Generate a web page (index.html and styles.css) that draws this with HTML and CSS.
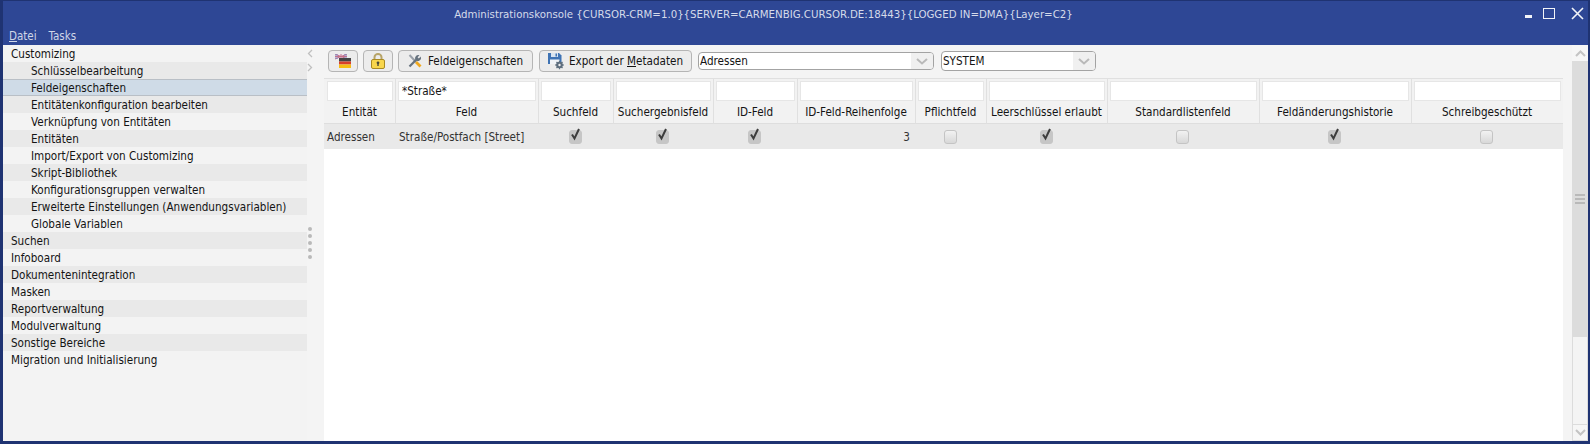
FILE: index.html
```html
<!DOCTYPE html>
<html lang="de">
<head>
<meta charset="utf-8">
<title>Administrationskonsole</title>
<link rel="stylesheet" href="styles.css">
</head>
<body>
<div class="window">
  <header class="chrome">
    <div class="titlebar">
      <div class="title">Administrationskonsole {CURSOR-CRM=1.0}{SERVER=CARMENBIG.CURSOR.DE:18443}{LOGGED IN=DMA}{Layer=C2}</div>
      <div class="winbtns">
        <span class="wb-min"></span>
        <span class="wb-max"></span>
        <svg class="wb-close" width="13" height="13" viewBox="0 0 13 13"><path d="M1 1l11 11M12 1L1 12" stroke="#f2f4f8" stroke-width="1.6" fill="none"/></svg>
      </div>
    </div>
    <nav class="menubar"><span><u>D</u>atei</span><span>Tasks</span></nav>
  </header>
  <div class="body">
    <aside class="sidebar">
      <div class="item odd">Customizing</div>
      <div class="item sub even">Schlüsselbearbeitung</div>
      <div class="item sub selected">Feldeigenschaften</div>
      <div class="item sub even">Entitätenkonfiguration bearbeiten</div>
      <div class="item sub odd">Verknüpfung von Entitäten</div>
      <div class="item sub even">Entitäten</div>
      <div class="item sub odd">Import/Export von Customizing</div>
      <div class="item sub even">Skript-Bibliothek</div>
      <div class="item sub odd">Konfigurationsgruppen verwalten</div>
      <div class="item sub even">Erweiterte Einstellungen (Anwendungsvariablen)</div>
      <div class="item sub odd">Globale Variablen</div>
      <div class="item even">Suchen</div>
      <div class="item odd">Infoboard</div>
      <div class="item even">Dokumentenintegration</div>
      <div class="item odd">Masken</div>
      <div class="item even">Reportverwaltung</div>
      <div class="item odd">Modulverwaltung</div>
      <div class="item even">Sonstige Bereiche</div>
      <div class="item odd">Migration und Initialisierung</div>
    </aside>
    <div class="splitter">
      <div class="arrows">
        <svg width="6" height="9" viewBox="0 0 6 9"><path d="M5 1L1.500 4.500 5 8" stroke="#c0c0c0" stroke-width="1.300" fill="none"/></svg>
        <svg width="6" height="9" viewBox="0 0 6 9"><path d="M1 1l3.500 3.500L1 8" stroke="#c0c0c0" stroke-width="1.300" fill="none"/></svg>
      </div>
      <div class="grip"><i></i><i></i><i></i><i></i><i></i></div>
    </div>
    <main class="main">
      <div class="toolbar">
        <button class="btn icon-btn">
          <svg width="16" height="14" viewBox="0 0 16 14">
            <rect x="0" y="0" width="12" height="5" fill="#eee9f0"/>
            <path d="M0 0l12 5M12 0L0 5M6 0v5M0 2.500h12" stroke="#c4708a" stroke-width="1" fill="none"/>
            <path d="M0 1h3M9 4h3M9 1h3M0 4h3" stroke="#7a80bc" stroke-width="1"/>
            <rect x="4" y="4" width="12" height="3.500" fill="#454545"/>
            <rect x="4" y="7.500" width="12" height="3" fill="#d8402a"/>
            <rect x="4" y="10.500" width="12" height="3.500" fill="#f6bd12"/>
          </svg>
        </button>
        <button class="btn icon-btn">
          <svg width="14" height="16" viewBox="0 0 14 16">
            <path d="M3.500 7V4.200a3.500 3.200 0 0 1 7 0V7" fill="none" stroke="#b7a468" stroke-width="2"/>
            <rect x="0.500" y="6.500" width="13" height="9" rx="1.500" fill="#f8d64c" stroke="#a98a22"/>
            <circle cx="7" cy="9.800" r="1.400" fill="#4a4a3a"/>
            <rect x="6.300" y="9.800" width="1.400" height="3.200" fill="#4a4a3a"/>
          </svg>
        </button>
        <button class="btn text-btn feld">
          <svg width="14" height="14" viewBox="0 0 14 14">
            <path d="M1.500 1l6.500 7" stroke="#9aa0a8" stroke-width="2" fill="none"/>
            <path d="M8 8l4.500 4.500" stroke="#f0a81e" stroke-width="2.800" fill="none"/>
            <path d="M1.500 12.500L8.200 5.800" stroke="#66727e" stroke-width="2.200" fill="none"/>
            <path d="M7.500 6a3.300 3.300 0 0 1 4-4.800L9.600 3.300l1.200 1.200 2-2A3.300 3.300 0 0 1 8 6.500z" fill="#66727e"/>
          </svg>
          <span>Feldeigenschaften</span>
        </button>
        <button class="btn text-btn export">
          <svg width="16" height="17" viewBox="0 0 16 17">
            <path d="M0 0h11l2.500 2.500V11H0z" fill="#3f73b4"/>
            <rect x="3" y="0" width="7" height="4" fill="#d9e4f0"/>
            <rect x="7.500" y="0.500" width="1.500" height="3" fill="#3f73b4"/>
            <rect x="2" y="6.500" width="9.500" height="4.500" fill="#f0f3f7"/>
            <circle cx="11.500" cy="12" r="3.300" fill="#5e6e7e"/>
            <path d="M11.500 7.800v8.400M7.300 12h8.400M8.500 9l6 6M14.500 9l-6 6" stroke="#5e6e7e" stroke-width="1.300"/>
            <circle cx="11.500" cy="12" r="1.200" fill="#f0f0f0"/>
          </svg>
          <span>Export der <u>M</u>etadaten</span>
        </button>
        <div class="combo combo-a"><span>Adressen</span><b><svg width="12" height="7" viewBox="0 0 12 7"><path d="M1 1l5 4.500L11 1" stroke="#b9b9b9" stroke-width="2" fill="none"/></svg></b></div>
        <div class="combo combo-b"><span>SYSTEM</span><b><svg width="12" height="7" viewBox="0 0 12 7"><path d="M1 1l5 4.500L11 1" stroke="#b9b9b9" stroke-width="2" fill="none"/></svg></b></div>
      </div>
      <div class="table">
        <div class="head first"><input class="filter"><div class="label">Entität</div></div>
        <div class="head"><input class="filter" value="*Straße*"><div class="label">Feld</div></div>
        <div class="head"><input class="filter"><div class="label">Suchfeld</div></div>
        <div class="head"><input class="filter"><div class="label">Suchergebnisfeld</div></div>
        <div class="head"><input class="filter"><div class="label">ID-Feld</div></div>
        <div class="head"><input class="filter"><div class="label">ID-Feld-Reihenfolge</div></div>
        <div class="head"><input class="filter"><div class="label">Pflichtfeld</div></div>
        <div class="head"><input class="filter"><div class="label">Leerschlüssel erlaubt</div></div>
        <div class="head"><input class="filter"><div class="label">Standardlistenfeld</div></div>
        <div class="head"><input class="filter"><div class="label">Feldänderungshistorie</div></div>
        <div class="head last"><input class="filter"><div class="label">Schreibgeschützt</div></div>

        <div class="cell">Adressen</div>
        <div class="cell">Straße/Postfach [Street]</div>
        <div class="cell center"><span class="check on"><svg width="11" height="13" viewBox="0 0 11 13"><path d="M2 6.500l2.500 4L9 1" stroke="#3c3c3c" stroke-width="2" fill="none"/></svg></span></div>
        <div class="cell center"><span class="check on"><svg width="11" height="13" viewBox="0 0 11 13"><path d="M2 6.500l2.500 4L9 1" stroke="#3c3c3c" stroke-width="2" fill="none"/></svg></span></div>
        <div class="cell center"><span class="check on"><svg width="11" height="13" viewBox="0 0 11 13"><path d="M2 6.500l2.500 4L9 1" stroke="#3c3c3c" stroke-width="2" fill="none"/></svg></span></div>
        <div class="cell right">3</div>
        <div class="cell center"><span class="check"></span></div>
        <div class="cell center"><span class="check on"><svg width="11" height="13" viewBox="0 0 11 13"><path d="M2 6.500l2.500 4L9 1" stroke="#3c3c3c" stroke-width="2" fill="none"/></svg></span></div>
        <div class="cell center"><span class="check"></span></div>
        <div class="cell center"><span class="check on"><svg width="11" height="13" viewBox="0 0 11 13"><path d="M2 6.500l2.500 4L9 1" stroke="#3c3c3c" stroke-width="2" fill="none"/></svg></span></div>
        <div class="cell center"><span class="check"></span></div>
      </div>
    </main>
    <div class="gutter"></div>
    <div class="scrollbar">
      <div class="sb-btn"><svg width="11" height="7" viewBox="0 0 11 7"><path d="M1 6l4.500-4.500L10 6" stroke="#c4c4c4" stroke-width="2" fill="none"/></svg></div>
      <div class="sb-thumb"><i></i><i></i><i></i></div>
      <div class="sb-track"></div>
      <div class="sb-btn down"><svg width="11" height="7" viewBox="0 0 11 7"><path d="M1 1l4.500 4.500L10 1" stroke="#c4c4c4" stroke-width="2" fill="none"/></svg></div>
    </div>
  </div>
</div>
</body>
</html>
```
FILE: styles.css
```css
* { box-sizing: border-box; }
html, body { margin: 0; padding: 0; }
body {
  width: 1590px;
  height: 444px;
  overflow: hidden;
  font-family: "DejaVu Sans Condensed", "DejaVu Sans", sans-serif;
  font-stretch: condensed;
  font-size: 11.600px;
  color: #141414;
}
.window {
  width: 1590px;
  height: 444px;
  display: flex;
  flex-direction: column;
  background: #2e4795;
  border-style: solid;
  border-color: #1f3372;
  border-width: 1px 2px 3px 3px;
}
.chrome { height: 44px; display: flex; flex-direction: column; flex: none; }
.titlebar {
  height: 26px;
  display: flex;
  align-items: center;
  justify-content: center;
  position: relative;
  color: #d5dbea;
  padding-right: 64px;
}
.title { font-size: 11.350px; }
.winbtns {
  position: absolute;
  right: 4px;
  top: 6px;
  display: flex;
  align-items: flex-start;
  gap: 11px;
}
.wb-min { width: 7px; height: 3px; background: #f2f4f8; margin-top: 8px; }
.wb-max { width: 12px; height: 11px; border: 1.500px solid #f2f4f8; margin: 1px 5px 0 0; }
.menubar {
  height: 18px;
  display: flex;
  gap: 12px;
  padding-left: 6px;
  align-items: center;
  color: #cfd6e8;
  font-size: 11.500px;
}
.body { flex: 1; display: flex; min-height: 0; background: #f4f4f4; }
.sidebar { width: 304px; flex: none; background: #f3f3f3; }
.item { height: 17px; line-height: 18px; padding-left: 8px; white-space: nowrap; }
.item.sub { padding-left: 28px; }
.item.odd { background: #f3f3f3; }
.item.even { background: #e9e9e9; }
.item.selected { background: #cfdbe7; border-top: 1px solid #b9bfc6; border-bottom: 1px solid #b9bfc6; line-height: 16px; }
.splitter {
  width: 17px;
  flex: none;
  display: flex;
  flex-direction: column;
  align-items: center;
  background: #f4f4f4;
  padding-right: 11px;
}
.arrows { display: flex; flex-direction: column; gap: 5px; margin-top: 4px; }
.grip { display: flex; flex-direction: column; gap: 3px; margin-top: 155px; }
.grip i { display: block; width: 4px; height: 4px; border-radius: 50%; background: #b9b9b9; }
.main { width: 1239px; flex: none; display: flex; flex-direction: column; }
.toolbar { height: 33px; flex: none; display: flex; align-items: center; padding: 0 0 1px 4px; }
.btn {
  height: 22px;
  display: flex;
  align-items: center;
  justify-content: center;
  font: inherit;
  color: inherit;
  background: #ececec;
  border: 1px solid #b5b5b5;
  border-radius: 4px;
  padding: 0;
  margin-right: 5px;
}
.icon-btn { width: 30px; }
.feld { width: 135px; gap: 6px; margin-right: 6px; }
.export { width: 153px; gap: 5px; margin-right: 6px; }
.combo {
  display: flex;
  align-items: center;
  background: #fff;
  border: 1px solid #a3a3a3;
  border-radius: 4px;
  overflow: hidden;
}
.combo span { flex: 1; padding-left: 1px; }
.combo b { width: 22px; align-self: stretch; background: #f0f0f0; display: flex; align-items: center; justify-content: center; }
.combo-a { width: 236px; height: 18px; margin-right: 7px; }
.combo-b { width: 155px; height: 20px; }
.table {
  flex: 1;
  display: grid;
  grid-template-columns: 72px 143px 75px 100px 84px 118px 71px 121px 152px 152px 151px;
  grid-template-rows: 46px 25px 1fr;
  background: #fff;
  align-content: start;
}
.head {
  background: #f2f2f2;
  border-top: 1px solid #e0e0e0;
  border-right: 1px solid #e0e0e0;
  border-bottom: 1px solid #dedede;
  display: flex;
  flex-direction: column;
  padding: 2px 2px 0 2px;
}
.head.first { padding-left: 3px; }
.head.last { border-right: 0; }
.filter {
  height: 20px;
  width: 100%;
  border: 1px solid #e6e6e6;
  background: #fff;
  font: inherit;
  color: inherit;
  padding: 0 3px;
  outline: 0;
}
.label { flex: 1; display: flex; align-items: center; justify-content: center; white-space: nowrap; padding-right: 1px; }
.cell {
  background: #e9e9e9;
  display: flex;
  align-items: center;
  padding: 0 3px;
  white-space: nowrap;
  color: #333;
}
.cell.center { justify-content: center; padding: 0 5px 0 2px; }
.cell.right { justify-content: flex-end; padding-right: 6px; }
.check {
  width: 13px;
  height: 14px;
  position: relative;
  border-radius: 3px;
  background: linear-gradient(#f2f2f2, #d8d8d8);
  border: 1px solid #c4c4c4;
  display: block;
}
.check.on { background: #c6c6c6; border-color: #c6c6c6; }
.check svg { position: absolute; left: 0; top: -3px; }
.gutter { width: 9px; flex: none; }
.scrollbar { width: 16px; flex: none; display: flex; flex-direction: column; }
.sb-btn { height: 16px; flex: none; background: #f6f6f6; display: flex; align-items: center; justify-content: center; }
.sb-btn.down { height: 17px; border: 1px solid #dcdcdc; }
.sb-thumb {
  height: 276px;
  flex: none;
  background: #dcdcdc;
  display: flex;
  flex-direction: column;
  align-items: center;
  justify-content: center;
  gap: 2px;
}
.sb-thumb i { display: block; width: 10px; height: 2px; background: #b9b9b9; }
.sb-track { flex: 1; background: #f4f4f4; border-left: 1px solid #dcdcdc; border-right: 1px solid #dcdcdc; }
```
